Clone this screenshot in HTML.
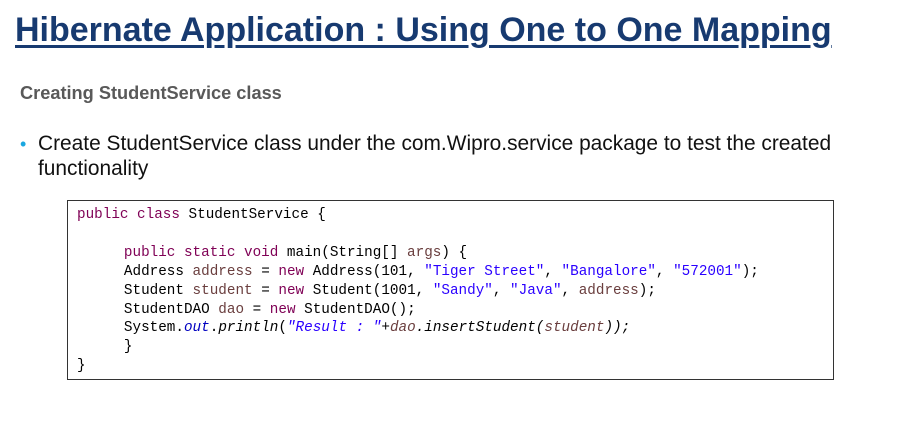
<!DOCTYPE html>
<html><head><style>
body{margin:0;width:903px;height:428px;background:#fff;position:relative;overflow:hidden;font-family:"Liberation Sans",sans-serif}
h1{position:absolute;left:15px;top:11px;margin:0;font-size:34px;font-weight:bold;color:#173a70;text-decoration:underline;text-decoration-thickness:3px;text-underline-offset:4px;white-space:nowrap}
.sub{position:absolute;left:20px;top:83px;font-size:18.2px;font-weight:bold;color:#595959;white-space:nowrap}
.b{position:absolute;left:38px;top:131px;font-size:20.9px;color:#111;line-height:25px;width:840px}
.dot{position:absolute;left:20px;top:134px;color:#1aa7e0;font-size:18px}
.code{position:absolute;left:67px;top:200px;width:765px;height:178px;border:1px solid #333;box-sizing:content-box}
pre{margin:0;position:absolute;left:9px;top:5px;font-family:"Liberation Mono",monospace;font-size:14.3px;line-height:18.9px;color:#000}
.k{color:#7f0055}.s{color:#2a00ff}.v{color:#6a3e3e}.i{font-style:italic}.f{color:#0000c0;font-style:italic}
.t{display:inline-block;width:4px}
</style></head><body>
<h1>Hibernate Application : Using One to One Mapping</h1>
<div class="sub">Creating StudentService class</div>
<div class="dot">•</div>
<div class="b">Create StudentService class under the com.Wipro.service package to test the created functionality</div>
<div class="code"><pre><span class="k">public class</span> StudentService {

     <span class="t"></span><span class="k">public static void</span> main(String[] <span class="v">args</span>) {
     <span class="t"></span>Address <span class="v">address</span> = <span class="k">new</span> Address(101, <span class="s">"Tiger Street"</span>, <span class="s">"Bangalore"</span>, <span class="s">"572001"</span>);
     <span class="t"></span>Student <span class="v">student</span> = <span class="k">new</span> Student(1001, <span class="s">"Sandy"</span>, <span class="s">"Java"</span>, <span class="v">address</span>);
     <span class="t"></span>StudentDAO <span class="v">dao</span> = <span class="k">new</span> StudentDAO();
     <span class="t"></span>System.<span class="f">out</span>.<span class="i">println</span>(<span class="s i">"Result : "</span><span class="i">+<span class="v">dao</span>.insertStudent(<span class="v">student</span>));</span>
     <span class="t"></span>}
}</pre></div>
</body></html>
